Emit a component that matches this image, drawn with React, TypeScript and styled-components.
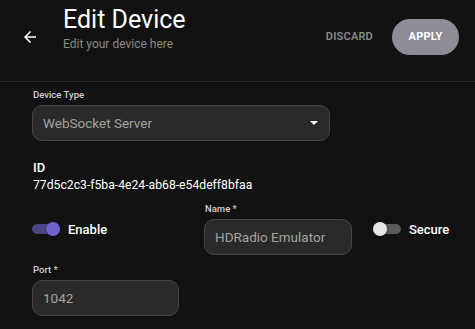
import React from "react";
import styled, { createGlobalStyle } from "styled-components";

const Global = createGlobalStyle`
  html, body { margin: 0; padding: 0; background: #121212; }
  body { font-family: Roboto, "Noto Sans", "Liberation Sans", sans-serif; color: #fff; }
  * { box-sizing: border-box; }
`;

const Page = styled.div`
  width: 475px;
  height: 329px;
  background: #121212;
  overflow: hidden;
`;

const Header = styled.header`
  display: flex;
  align-items: center;
  height: 82px;
  padding: 0 16px 8px 12px;
  border-bottom: 1px solid #2a2a2a;
`;

const IconButton = styled.button`
  width: 36px;
  height: 36px;
  border: none;
  background: transparent;
  color: #fff;
  display: flex;
  align-items: center;
  justify-content: center;
  padding: 0;
  margin-right: 15px;
`;

const TitleBlock = styled.div`
  display: flex;
  flex-direction: column;
  align-self: flex-start;
  margin-top: 6px;
  flex: 1;
`;

const Title = styled.h1`
  margin: 0;
  font-size: 25px;
  line-height: 28px;
  font-weight: 400;
  color: #fff;
`;

const Subtitle = styled.p`
  margin: 3px 0 0;
  font-size: 12px;
  line-height: 14px;
  color: #8a8a8a;
`;

const TextButton = styled.button`
  border: none;
  background: transparent;
  color: #8a8a8a;
  font-family: inherit;
  font-weight: 600;
  font-size: 11px;
  letter-spacing: 0.2px;
  padding: 0;
  margin-right: 19px;
  text-transform: uppercase;
`;

const PillButton = styled.button`
  border: none;
  background: #8f8c97;
  color: #fff;
  font-family: inherit;
  font-weight: 700;
  font-size: 11px;
  letter-spacing: 0.2px;
  width: 67px;
  height: 36px;
  border-radius: 18px;
  text-transform: uppercase;
`;

const Form = styled.div`
  padding: 7px 0 0 32px;
  display: flex;
  flex-direction: column;
`;

const Field = styled.div<{ $width: number }>`
  display: flex;
  flex-direction: column;
  width: ${(p) => p.$width}px;
`;

const Label = styled.label`
  font-size: 9.5px;
  line-height: 12px;
  font-weight: 500;
  color: #d0d0d0;
  margin-bottom: 4px;
  padding-left: 1px;
`;

const InputBox = styled.div`
  height: 36px;
  border-radius: 10px;
  background: #2a2a2a;
  border: 1px solid #444;
  display: flex;
  align-items: center;
  padding: 0 11px 0 10px;
  font-size: 13.5px;
  color: #a3a3a3;
`;

const SelectValue = styled.span`
  flex: 1;
`;

const IdBlock = styled.div`
  margin-top: 19px;
  display: flex;
  flex-direction: column;
  padding-left: 1px;
`;

const IdLabel = styled.div`
  font-size: 13px;
  line-height: 15px;
  font-weight: 500;
  color: #fff;
`;

const IdValue = styled.div`
  margin-top: 3px;
  font-size: 12.2px;
  line-height: 15px;
  color: #fff;
`;

const Row = styled.div`
  margin-top: 10px;
  display: grid;
  grid-template-columns: 151px 148px auto;
  column-gap: 21px;
  align-items: center;
`;

const SwitchRow = styled.div`
  display: flex;
  align-items: center;
  gap: 8px;
  font-size: 13px;
  font-weight: 500;
  color: #fff;
`;

const Track = styled.div<{ $on: boolean }>`
  position: relative;
  width: 28px;
  height: 10px;
  border-radius: 5px;
  background: ${(p) => (p.$on ? "#4a4784" : "#5a5a5a")};
`;

const Thumb = styled.div<{ $on: boolean }>`
  position: absolute;
  top: -2px;
  left: ${(p) => (p.$on ? "14px" : "0")};
  width: 14px;
  height: 14px;
  border-radius: 50%;
  background: ${(p) => (p.$on ? "#6c64d2" : "#e6e6e6")};
  box-shadow: 0 1px 2px rgba(0, 0, 0, 0.5);
`;

const PortField = styled(Field)`
  margin-top: 9px;
`;

const Switch = ({ on, label }: { on: boolean; label: string }) => (
  <SwitchRow>
    <Track $on={on}>
      <Thumb $on={on} />
    </Track>
    <span>{label}</span>
  </SwitchRow>
);

export default function App() {
  return (
    <Page>
      <Global />
      <Header>
        <IconButton aria-label="back">
          <svg width="18" height="18" viewBox="0 0 24 24" fill="#fff">
            <path d="M20 11H7.83l5.59-5.59L12 4l-8 8 8 8 1.41-1.41L7.83 13H20v-2z" />
          </svg>
        </IconButton>
        <TitleBlock>
          <Title>Edit Device</Title>
          <Subtitle>Edit your device here</Subtitle>
        </TitleBlock>
        <TextButton>Discard</TextButton>
        <PillButton>Apply</PillButton>
      </Header>
      <Form>
        <Field $width={298}>
          <Label>Device Type</Label>
          <InputBox>
            <SelectValue>WebSocket Server</SelectValue>
            <svg width="8" height="4" viewBox="0 0 8 4" fill="#fff">
              <path d="M0 0h8L4 4z" />
            </svg>
          </InputBox>
        </Field>
        <IdBlock>
          <IdLabel>ID</IdLabel>
          <IdValue>77d5c2c3-f5ba-4e24-ab68-e54deff8bfaa</IdValue>
        </IdBlock>
        <Row>
          <Switch on={true} label="Enable" />
          <Field $width={148}>
            <Label>Name *</Label>
            <InputBox>HDRadio Emulator</InputBox>
          </Field>
          <Switch on={false} label="Secure" />
        </Row>
        <PortField $width={147}>
          <Label>Port *</Label>
          <InputBox>1042</InputBox>
        </PortField>
      </Form>
    </Page>
  );
}
